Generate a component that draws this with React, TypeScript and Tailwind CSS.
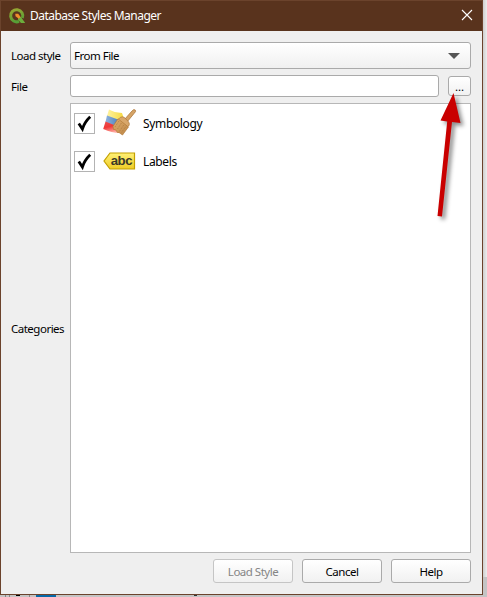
import type { ReactNode } from "react";

function QgisLogo() {
  return (
    <svg className="h-[18px] w-[18px] shrink-0" viewBox="0 0 18 18">
      <defs>
        <linearGradient id="ring" x1="0" y1="0" x2="0.3" y2="1">
          <stop offset="0" stopColor="#9aa832" />
          <stop offset="1" stopColor="#569f36" />
        </linearGradient>
      </defs>
      <path d="M14.4 11A6.1 6.1 0 1 0 11 14.4" fill="none" stroke="url(#ring)" strokeWidth="3" />
      <path d="M10.5 10L13 10L17.2 16H13L9.8 12.5Z" fill="#6cae3c" />
      <path d="M7.3 6.8H10.2L12.6 10L10.8 11.8L7.5 9.2Z" fill="#f0902c" />
    </svg>
  );
}

function SymbologyIcon() {
  return (
    <svg className="h-[28px] w-[34px] shrink-0" viewBox="0 0 34 28">
      <defs>
        <linearGradient id="yellow"><stop stopColor="#fff3a0" /><stop offset="1" stopColor="#f5d83e" /></linearGradient>
        <linearGradient id="blue"><stop stopColor="#8fb2dc" /><stop offset="1" stopColor="#4c80be" /></linearGradient>
        <linearGradient id="red" x1="0" y1="0" x2=".4" y2="1"><stop stopColor="#e85050" /><stop offset=".5" stopColor="#f03838" /><stop offset="1" stopColor="#ffaaa0" /></linearGradient>
        <linearGradient id="brush" x1="0" y1="0" x2="1" y2="1"><stop stopColor="#e0ad6c" /><stop offset="1" stopColor="#bd8748" /></linearGradient>
      </defs>
      <path d="M6 .5Q11 3.5 19 4L21 10L15 13L4 7Z" fill="url(#yellow)" />
      <path d="M4 6.5L15 10.5L16 14L11 18L2.5 13Z" fill="url(#blue)" />
      <path d="M2.5 12.5L11 16L18 24Q10 24.5 .2 20Z" fill="url(#red)" />
      <path d="M21 11L29 2Q31 -.2 32.2 1Q33.5 2.3 31 4.5L24 13Z" fill="#d6a467" stroke="#ad783c" strokeWidth=".8" />
      <path d="M17.5 8.2Q20 7 22 9L25.7 13Q27 15 25.8 17L23.5 18.2L15.2 10.5Z" fill="#d9a76a" stroke="#ad783c" strokeWidth=".7" />
      <path d="M15 9.8L25.4 18L19.5 26L16 23.5L14.5 23.5L12.5 20.7L10.5 20.4L10 17.3Z" fill="url(#brush)" stroke="#b27a38" strokeWidth=".7" />
      <path d="M16 12L12 18M18.4 14L14.2 20.5M20.7 16L16 23M22.7 17.8L18 24" stroke="#a5733a" strokeWidth=".7" strokeDasharray="1 1" />
    </svg>
  );
}

function LabelsIcon() {
  return (
    <svg className="h-[20px] w-[34px] shrink-0" viewBox="0 0 34 20">
      <defs>
        <linearGradient id="tag" x1="0" y1="0" x2="0" y2="1"><stop stopColor="#fff176" /><stop offset="1" stopColor="#efcc26" /></linearGradient>
      </defs>
      <path d="M7 2H31.5V18H7L1 10Z" fill="url(#tag)" stroke="#c4a000" strokeWidth="1.2" />
      <text x="7.8" y="14" textLength="21.2" lengthAdjust="spacingAndGlyphs" className="font-['Liberation_Sans',sans-serif] text-[12.5px] font-bold" fill="#3b3928">abc</text>
    </svg>
  );
}

function CategoryRow({ label, children }: { label: string; children: ReactNode }) {
  return (
    <div className="flex h-[38px] items-center">
      <div className="h-[21px] w-[21px] shrink-0 border border-[#b3b3b3] bg-white">
        <svg className="h-[19px] w-[19px]" viewBox="0 0 19 19">
          <path d="M3.8 9.5L7.4 15Q9.8 7.8 15.2 2.8" fill="none" stroke="#000" strokeWidth="2.8" />
        </svg>
      </div>
      <div className="ml-2 flex w-[34px] items-center">{children}</div>
      <span className="ml-[6px] pt-px text-[12px] tracking-[-0.35px]">{label}</span>
    </div>
  );
}

function DialogButton({ label, disabled }: { label: string; disabled?: boolean }) {
  return (
    <button
      disabled={disabled}
      className="h-6 w-20 rounded-[3px] border border-[#aaa] bg-linear-to-b from-white to-[#f1f1f1] pt-px leading-[22px] disabled:border-[#c5c5c5] disabled:text-[#858585]"
    >
      {label}
    </button>
  );
}

export default function App() {
  return (
    <div className="relative h-[597px] w-[487px] overflow-hidden bg-[#c4c4c4] font-['Noto_Sans',sans-serif] text-[11.5px] tracking-[-0.5px] text-black">
      <div className="absolute top-0 right-0 h-[577px] w-1 bg-linear-to-r from-[#cecece] to-[#ededed]" />
      <div className="absolute bottom-0 left-0 flex h-[2px] w-full items-start">
        <span className="ml-[5px] h-[2px] w-px bg-[#858585]" />
        <span className="ml-[3px] h-[2px] w-px bg-[#858585]" />
        <span className="ml-[6px] h-px w-1 bg-black" />
        <span className="ml-[9px] h-[2px] w-px bg-[#858585]" />
        <span className="ml-[6px] h-[2px] w-5 bg-[#0668a8]" />
        <span className="ml-[138px] h-px w-[3px] bg-[#333]" />
      </div>
      <main className="relative flex h-[595px] w-[483px] flex-col border border-[#6b432c] bg-[#efefef]">
        <header className="flex h-[30px] shrink-0 items-center bg-[#59331d] pl-[7px] text-white">
          <QgisLogo />
          <h1 className="ml-1 text-[12px] leading-[18px] tracking-[-0.52px]">Database Styles Manager</h1>
          <svg className="mt-[-2px] mr-[9px] ml-auto h-3 w-3" viewBox="0 0 12 12">
            <path d="M1 1L11 11M11 1L1 11" stroke="#fff" strokeWidth="1.1" />
          </svg>
        </header>
        <div className="grid grid-cols-[59px_401px] grid-rows-[27px_22px_450px] gap-y-[6px] pt-[11px] pl-[10px]">
          <label className="self-center pt-px">Load style</label>
          <div className="flex items-center rounded-[3px] border border-[#aaa] bg-linear-to-b from-white to-[#f0f0f0] pr-[10px] pl-[3px]">
            <span className="pt-px">From File</span>
            <svg className="ml-auto h-[6px] w-3" viewBox="0 0 12 6"><path d="M0 0H12L6 6Z" fill="#555" /></svg>
          </div>
          <label className="self-center pt-px">File</label>
          <div className="flex">
            <input aria-label="File" className="h-[22px] w-[369px] rounded-[3px] border border-[#aaa] bg-white" />
            <button className="mt-px ml-[9px] h-[20px] w-[23px] rounded-[3px] border border-[#aaa] bg-linear-to-b from-white to-[#f1f1f1] pt-px leading-[18px] tracking-normal" aria-label="Browse">...</button>
          </div>
          <label className="self-center pt-px">Categories</label>
          <div className="border border-[#b7b7b7] bg-white pl-[3px]">
            <CategoryRow label="Symbology"><SymbologyIcon /></CategoryRow>
            <CategoryRow label="Labels"><LabelsIcon /></CategoryRow>
          </div>
        </div>
        <footer className="mt-[6px] flex justify-end gap-[9px] pr-[11px]">
          <DialogButton label="Load Style" disabled />
          <DialogButton label="Cancel" />
          <DialogButton label="Help" />
        </footer>
      </main>
      <svg className="pointer-events-none absolute top-[90px] left-[430px] h-[135px] w-[40px] drop-shadow-[3px_3px_2px_rgba(0,0,0,0.45)]" viewBox="0 0 40 135">
        <path d="M23.5 3L30.5 33L22 32L12 126.5L7.5 126L17.2 31.5L10.5 30.5Z" fill="#c90000" />
      </svg>
    </div>
  );
}
